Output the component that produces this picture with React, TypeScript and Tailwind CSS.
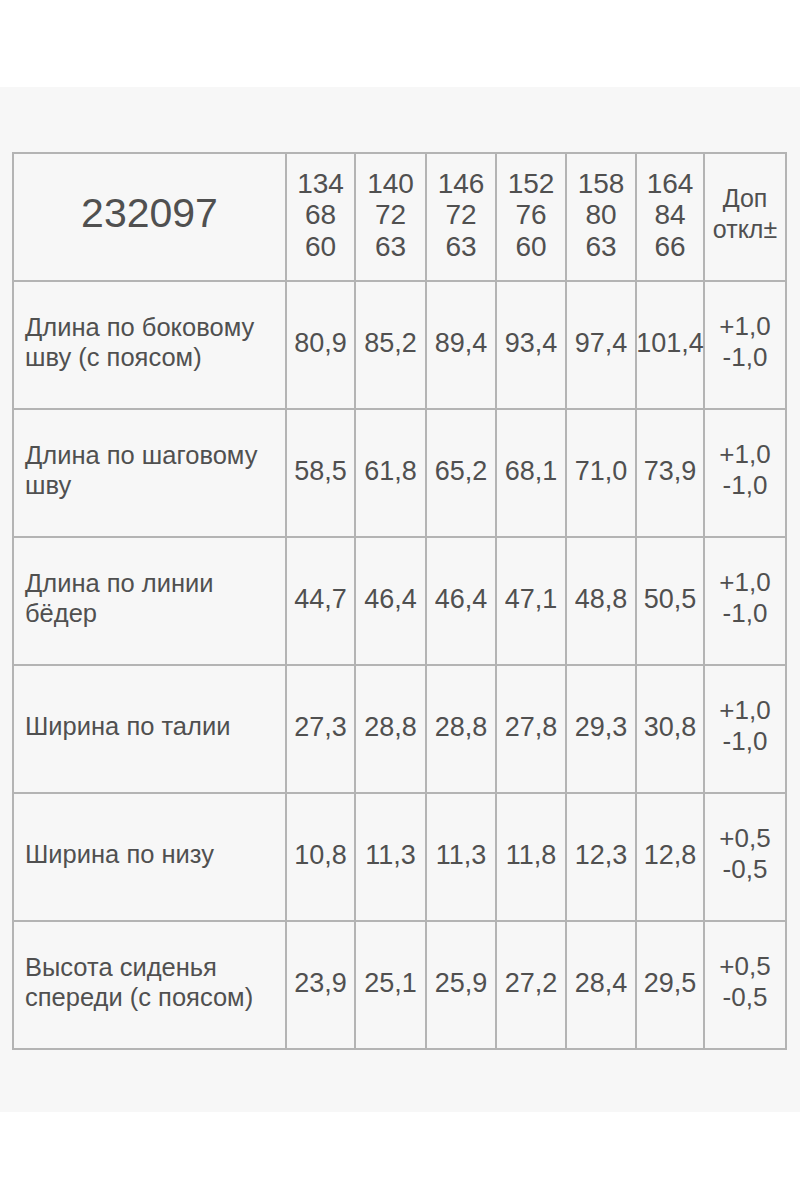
const SIZES = [
  ['134', '68', '60'],
  ['140', '72', '63'],
  ['146', '72', '63'],
  ['152', '76', '60'],
  ['158', '80', '63'],
  ['164', '84', '66'],
];

const ROWS = [
  { label: ['Длина по боковому', 'шву (с поясом)'], values: ['80,9', '85,2', '89,4', '93,4', '97,4', '101,4'], tol: ['+1,0', '-1,0'] },
  { label: ['Длина по шаговому', 'шву'], values: ['58,5', '61,8', '65,2', '68,1', '71,0', '73,9'], tol: ['+1,0', '-1,0'] },
  { label: ['Длина по линии', 'бёдер'], values: ['44,7', '46,4', '46,4', '47,1', '48,8', '50,5'], tol: ['+1,0', '-1,0'] },
  { label: ['Ширина по талии'], values: ['27,3', '28,8', '28,8', '27,8', '29,3', '30,8'], tol: ['+1,0', '-1,0'] },
  { label: ['Ширина по низу'], values: ['10,8', '11,3', '11,3', '11,8', '12,3', '12,8'], tol: ['+0,5', '-0,5'] },
  { label: ['Высота сиденья', 'спереди (с поясом)'], values: ['23,9', '25,1', '25,9', '27,2', '28,4', '29,5'], tol: ['+0,5', '-0,5'] },
];

const cell = 'border-r-2 border-b-2 border-[#b4b4b4] flex items-center';

export default function App() {
  return (
    <div className="w-[800px] h-[1200px] bg-white text-[#505050]" style={{ fontFamily: '"Liberation Sans", Arial, sans-serif' }}>
      <div className="h-[87px]" />
      <div className="h-[1025px] bg-[#f7f7f7] pt-[65px] pl-[12px]">
        <div className="grid grid-cols-[273px_69px_71px_70px_70px_70px_68px_82px] border-l-2 border-t-2 border-[#b4b4b4] w-max">
          {/* header */}
          <div className={`${cell} h-[128px] justify-center text-[41px] pb-[6px]`}>232097</div>
          {SIZES.map((s) => (
            <div key={s[0]} className={`${cell} h-[128px] flex-col justify-center text-[28px] leading-[31.5px] pb-[4px]`}>
              {s.map((v, i) => (
                <span key={i}>{v}</span>
              ))}
            </div>
          ))}
          <div className={`${cell} h-[128px] flex-col justify-center text-[25px] leading-[31px] pb-[6px]`}>
            <span>Доп</span>
            <span>откл±</span>
          </div>

          {/* rows */}
          {ROWS.map((r) => (
            <>
              <div key={r.label[0]} className={`${cell} h-[128px] pl-[11px] text-[25.5px] leading-[30px] pb-[6px]`}>
                <div className="flex flex-col">
                  {r.label.map((l) => (
                    <span key={l}>{l}</span>
                  ))}
                </div>
              </div>
              {r.values.map((v, i) => (
                <div key={r.label[0] + i} className={`${cell} h-[128px] justify-center text-[27px] pb-[4px]`}>
                  {v}
                </div>
              ))}
              <div key={r.label[0] + 'tol'} className={`${cell} h-[128px] flex-col justify-center text-[26px] leading-[31px] pb-[6px]`}>
                <span>{r.tol[0]}</span>
                <span>{r.tol[1]}</span>
              </div>
            </>
          ))}
        </div>
      </div>
    </div>
  );
}
